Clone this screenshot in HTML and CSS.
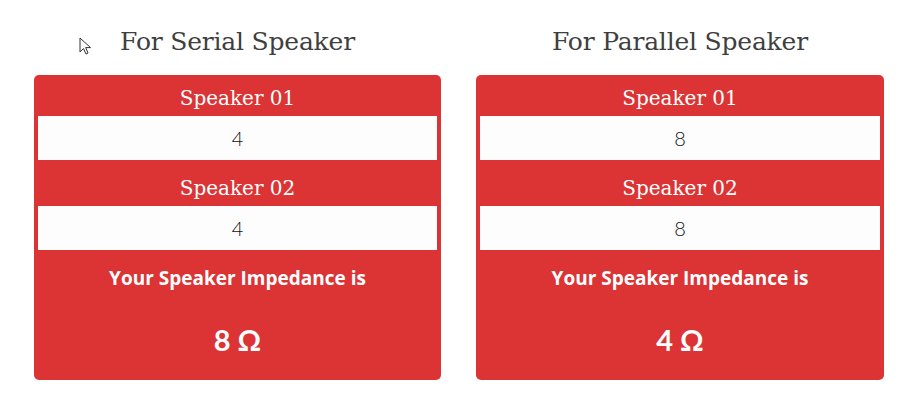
FILE: index.html
```html
<!DOCTYPE html>
<html>
<head>
<meta charset="utf-8">
<link rel="stylesheet" href="styles.css">
</head>
<body>
<div class="page">
  <section class="col">
    <h2 class="title">For Serial Speaker</h2>
    <div class="card">
      <div class="label first">Speaker 01</div>
      <div class="input">4</div>
      <div class="label">Speaker 02</div>
      <div class="input">4</div>
      <div class="result">Your Speaker Impedance is</div>
      <div class="value">8 Ω</div>
    </div>
  </section>
  <section class="col">
    <h2 class="title">For Parallel Speaker</h2>
    <div class="card">
      <div class="label first">Speaker 01</div>
      <div class="input">8</div>
      <div class="label">Speaker 02</div>
      <div class="input">8</div>
      <div class="result">Your Speaker Impedance is</div>
      <div class="value">4 Ω</div>
    </div>
  </section>
  <svg class="cursor" width="13" height="19" viewBox="0 0 13 19"><path d="M1 1 L1 15 L4.5 11.5 L7 17 L9 16 L6.7 10.6 L11.5 10.6 Z" fill="#fff" stroke="#333" stroke-width="1" stroke-linejoin="round"/></svg>
</div>
</body>
</html>
```
FILE: styles.css
```css
html, body {
  margin: 0;
  padding: 0;
  background: #ffffff;
}
.page {
  position: relative;
  display: grid;
  grid-template-columns: 407px 408px;
  column-gap: 35px;
  padding-left: 34px;
}
.col {
  display: flex;
  flex-direction: column;
}
.title {
  margin: 0;
  height: 75px;
  box-sizing: border-box;
  padding-top: 27px;
  font-family: "DejaVu Serif", serif;
  font-weight: normal;
  font-size: 25px;
  line-height: 30px;
  color: #3f3f3f;
  text-align: center;
  letter-spacing: -0.2px;
}
.card {
  background: #dc3334;
  border-radius: 5px;
  padding: 0 4px 26px;
  display: flex;
  flex-direction: column;
  color: #ffffff;
  text-align: center;
}
.label {
  font-family: "DejaVu Serif", serif;
  font-size: 20px;
  font-weight: 300;
  padding-top: 10px;
  line-height: 36px;
}
.label.first {
  padding-top: 6px;
  line-height: 35px;
}
.input {
  background: #fdfdfd;
  height: 44px;
  line-height: 44px;
  font-family: "Lato", sans-serif;
  font-weight: 300;
  font-size: 20px;
  color: #111;
}
.result {
  margin-top: 16px;
  line-height: 24px;
  font-family: "Open Sans", sans-serif;
  font-weight: bold;
  font-size: 19px;
  letter-spacing: 0;
}
.value {
  margin-top: 36px;
  line-height: 28px;
  font-family: "Lato", sans-serif;
  font-weight: bold;
  font-size: 29px;
}
.cursor {
  position: absolute;
  left: 79px;
  top: 37px;
}
```
